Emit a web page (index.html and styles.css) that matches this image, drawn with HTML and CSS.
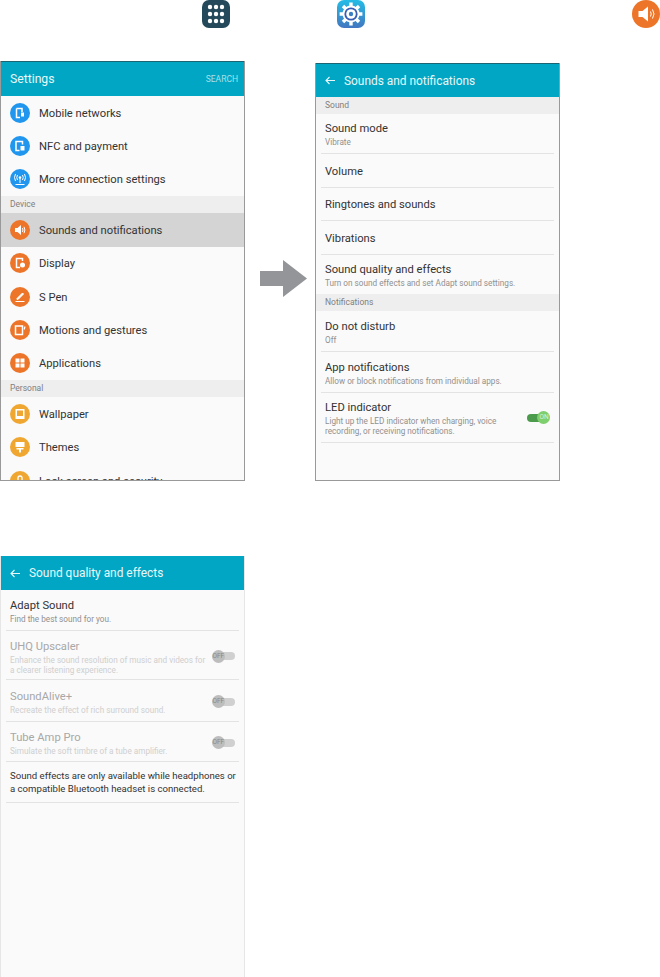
FILE: index.html
```html
<!DOCTYPE html>
<html lang="en">
<head>
  <meta charset="UTF-8" />
  <meta name="viewport" content="width=device-width, initial-scale=1.0" />
  <title>Sound quality and effects</title>
  <link rel="stylesheet" href="styles.css">
</head>
<body>

<div class="step-icons">
  <svg class="step-icon" viewBox="0 0 28 28">
    <rect width="28" height="28" rx="7" fill="#23495a"/>
    <g fill="#fff">
      <circle cx="8" cy="7" r="2.2"/><circle cx="14" cy="7" r="2.2"/><circle cx="20" cy="7" r="2.2"/>
      <circle cx="8" cy="14" r="2.2"/><circle cx="14" cy="14" r="2.2"/><circle cx="20" cy="14" r="2.2"/>
      <circle cx="8" cy="21" r="2.2"/><circle cx="14" cy="21" r="2.2"/><circle cx="20" cy="21" r="2.2"/>
    </g>
  </svg>
  <svg class="step-icon gear" viewBox="0 0 28 28">
    <defs>
      <linearGradient id="gear-bg" x1="0" y1="0" x2="0" y2="1">
        <stop offset="0" stop-color="#25bce6"/>
        <stop offset="1" stop-color="#4277c0"/>
      </linearGradient>
    </defs>
    <rect width="28" height="28" rx="7" fill="url(#gear-bg)"/>
    <circle cx="14" cy="14" r="8.5" fill="#fff"/>
    <g stroke="#fff" stroke-width="3.4">
      <path d="M14 2.6v22.8M2.6 14h22.8M6 6l16 16M22 6L6 22"/>
    </g>
    <circle cx="14" cy="14" r="6.6" fill="#3a5db4"/>
    <circle cx="14" cy="14" r="4.8" fill="#fff"/>
    <circle cx="14" cy="14" r="2.2" fill="#3a7fc4"/>
  </svg>
  <svg class="step-icon speaker" viewBox="0 0 28 28">
    <circle cx="14" cy="14" r="14" fill="#ec7529"/>
    <path d="M6.500 11h4l5.500-4.500v15L10.500 17h-4z" fill="#fff"/>
    <path d="M18.500 11.500q1.500 2.500 0 5M20.500 9.500q3 4.500 0 9" fill="none" stroke="#fff" stroke-width="1"/>
  </svg>
</div>

<div class="panels">
  <div class="panel settings">
    <div class="app-bar">
      <span class="app-title">Settings</span>
      <span class="app-action">SEARCH</span>
    </div>
    <div class="menu-row">
      <svg class="menu-icon" viewBox="0 0 20 20"><circle cx="10" cy="10" r="10" fill="#2196ee"/><path d="M6.500 5.500h5.500v3.500M6.500 5.500v9h3.500" fill="none" stroke="#fff" stroke-width="1.500"/><path d="M11 9.500h3v4h-3z" fill="#fff"/></svg>
      <span>Mobile networks</span>
    </div>
    <div class="menu-row">
      <svg class="menu-icon" viewBox="0 0 20 20"><circle cx="10" cy="10" r="10" fill="#2196ee"/><path d="M12.500 8.500V5.500h-6.500v9h3.500" fill="none" stroke="#fff" stroke-width="1.500"/><path d="M10.500 10h4v4.500h-4z" fill="#fff"/></svg>
      <span>NFC and payment</span>
    </div>
    <div class="menu-row">
      <svg class="menu-icon" viewBox="0 0 20 20"><circle cx="10" cy="10" r="10" fill="#2196ee"/><circle cx="10" cy="8.500" r="1.300" fill="#fff"/><path d="M10 9v5M7.500 6q-1.500 2.500 0 5M12.500 6q1.500 2.500 0 5M5.500 5q-2 3.500 0 7M14.500 5q2 3.500 0 7M5.500 15.500h9" fill="none" stroke="#fff" stroke-width="1"/></svg>
      <span>More connection settings</span>
    </div>
    <div class="section-label">Device</div>
    <div class="menu-row selected">
      <svg class="menu-icon" viewBox="0 0 20 20"><circle cx="10" cy="10" r="10" fill="#ec7529"/><path d="M5 8h2.500l3.500-3v10l-3.500-3H5z" fill="#fff"/><path d="M12.500 8q1 2 0 4M14 6.800q1.800 3.200 0 6.400" fill="none" stroke="#fff" stroke-width="1"/></svg>
      <span>Sounds and notifications</span>
    </div>
    <div class="menu-row">
      <svg class="menu-icon" viewBox="0 0 20 20"><circle cx="10" cy="10" r="10" fill="#ec7529"/><path d="M12.500 8V5.500h-6v9h3.500" fill="none" stroke="#fff" stroke-width="1.500"/><circle cx="12.500" cy="12" r="2.500" fill="#fff"/></svg>
      <span>Display</span>
    </div>
    <div class="menu-row">
      <svg class="menu-icon" viewBox="0 0 20 20"><circle cx="10" cy="10" r="10" fill="#ec7529"/><path d="M7 11.500l5.500-5.500 1 1-5.500 5.500H7zM5.500 14.500h9" fill="#fff" stroke="#fff" stroke-width="1"/></svg>
      <span>S Pen</span>
    </div>
    <div class="menu-row">
      <svg class="menu-icon" viewBox="0 0 20 20"><circle cx="10" cy="10" r="10" fill="#ec7529"/><path d="M5.500 6h7v8.500h-7z" fill="none" stroke="#fff" stroke-width="1.500"/><path d="M15 6.500l-.8 3" stroke="#fff" stroke-width="1.200"/></svg>
      <span>Motions and gestures</span>
    </div>
    <div class="menu-row">
      <svg class="menu-icon" viewBox="0 0 20 20"><circle cx="10" cy="10" r="10" fill="#ec7529"/><path d="M5.500 5.500h4v4h-4zM10.500 5.500h4v4h-4zM5.500 10.500h4v4h-4zM10.500 10.500h4v4h-4z" fill="#fff"/></svg>
      <span>Applications</span>
    </div>
    <div class="section-label">Personal</div>
    <div class="menu-row">
      <svg class="menu-icon" viewBox="0 0 20 20"><circle cx="10" cy="10" r="10" fill="#f0a732"/><path d="M5.500 5h9v10h-9z" fill="#fff"/><path d="M7 6.500h6v5.500H7z" fill="#f0a732"/></svg>
      <span>Wallpaper</span>
    </div>
    <div class="menu-row">
      <svg class="menu-icon" viewBox="0 0 20 20"><circle cx="10" cy="10" r="10" fill="#f0a732"/><path d="M5.500 5h9v5h-9zM6.500 11h7v1.500h-2.500v3h-2v-3H6.500z" fill="#fff"/></svg>
      <span>Themes</span>
    </div>
    <div class="menu-row">
      <svg class="menu-icon" viewBox="0 0 20 20"><circle cx="10" cy="10" r="10" fill="#f0a732"/><path d="M6.500 9h7v6h-7z" fill="#fff"/><path d="M8 9V7a2 2 0 0 1 4 0v2" fill="none" stroke="#fff" stroke-width="1.300"/></svg>
      <span>Lock screen and security</span>
    </div>
  </div>

  <svg class="arrow" viewBox="0 0 47 37"><path d="M0 11h23V0l24 18.500L23 37V26H0z" fill="#939598"/></svg>

  <div class="panel sounds">
    <div class="app-bar short">
      <svg class="back" viewBox="0 0 10 9"><path d="M10 4.500H1M4.500 1L1 4.500 4.500 8" fill="none" stroke="#e8f7fa" stroke-width="1.100"/></svg>
      <span class="app-title sub">Sounds and notifications</span>
    </div>
    <div class="section-label">Sound</div>
    <div class="item h40"><div class="item-title">Sound mode</div><div class="item-sub">Vibrate</div></div>
    <div class="item h34"><div class="item-title">Volume</div></div>
    <div class="item h33"><div class="item-title">Ringtones and sounds</div></div>
    <div class="item h34"><div class="item-title">Vibrations</div></div>
    <div class="item h39 plain"><div class="item-title">Sound quality and effects</div><div class="item-sub">Turn on sound effects and set Adapt sound settings.</div></div>
    <div class="section-label">Notifications</div>
    <div class="item h41"><div class="item-title">Do not disturb</div><div class="item-sub">Off</div></div>
    <div class="item h41"><div class="item-title">App notifications</div><div class="item-sub">Allow or block notifications from individual apps.</div></div>
    <div class="item h50 with-toggle">
      <div>
        <div class="item-title">LED indicator</div>
        <div class="item-sub">Light up the LED indicator when charging, voice<br>recording, or receiving notifications.</div>
      </div>
      <span class="toggle on">ON</span>
    </div>
  </div>
</div>

<div class="panel effects">
  <div class="app-bar short">
    <svg class="back" viewBox="0 0 10 9"><path d="M10 4.500H1M4.500 1L1 4.500 4.500 8" fill="none" stroke="#e8f7fa" stroke-width="1.100"/></svg>
    <span class="app-title sub">Sound quality and effects</span>
  </div>
  <div class="item h41"><div class="item-title">Adapt Sound</div><div class="item-sub">Find the best sound for you.</div></div>
  <div class="item h49 with-toggle disabled">
    <div>
      <div class="item-title">UHQ Upscaler</div>
      <div class="item-sub">Enhance the sound resolution of music and videos for<br>a clearer listening experience.</div>
    </div>
    <span class="toggle">OFF</span>
  </div>
  <div class="item h42 with-toggle disabled">
    <div>
      <div class="item-title">SoundAlive+</div>
      <div class="item-sub">Recreate the effect of rich surround sound.</div>
    </div>
    <span class="toggle">OFF</span>
  </div>
  <div class="item h40 with-toggle disabled">
    <div>
      <div class="item-title">Tube Amp Pro</div>
      <div class="item-sub">Simulate the soft timbre of a tube amplifier.</div>
    </div>
    <span class="toggle">OFF</span>
  </div>
  <div class="item h41 note">Sound effects are only available while headphones or<br>a compatible Bluetooth headset is connected.</div>
</div>

</body>
</html>
```

FILE: styles.css
```css
:root {
  --bar-color: #00a6c3;
  --panel-bg: #fafafa;
  --section-bg: #eeeeee;
  --line-color: #e3e3e3;
  --text-color: #333;
  --sub-color: #909090;
}
body {
  font-family: Roboto, "Liberation Sans", sans-serif;
  background: #fff;
  color: var(--text-color);
  margin: 0;
  width: 660px;
  height: 977px;
  overflow: hidden;
}
.step-icons {
  display: flex;
  height: 28px;
  padding-left: 202px;
}
.step-icon {
  width: 28px;
  height: 28px;
  display: block;
}
.step-icon.gear {
  margin-left: 107px;
}
.step-icon.speaker {
  margin-left: auto;
}
.panels {
  display: flex;
  align-items: flex-end;
  margin-top: 33px;
}
.panel {
  box-sizing: border-box;
  width: 245px;
  background: var(--panel-bg);
  border: 1px solid #999;
  border-top: 0;
  overflow: hidden;
}
.settings {
  height: 420px;
}
.sounds {
  height: 418px;
  margin-left: 8px;
}
.effects {
  height: 421px;
  margin-top: 75px;
  border-color: #e6e6e6;
  border-bottom: 0;
}
.arrow {
  width: 47px;
  height: 37px;
  flex: none;
  margin-left: 15px;
  align-self: center;
  margin-top: 14px;
}
.app-bar {
  box-sizing: border-box;
  display: flex;
  align-items: center;
  justify-content: space-between;
  height: 35px;
  padding: 0 6px 0 9px;
  background: var(--bar-color);
  border-top: 1px solid #1d6473;
}
.app-bar.short {
  justify-content: flex-start;
  height: 34px;
}
.effects .app-bar.short {
  border-top: 0;
}
.app-title {
  font-size: 12.200px;
  color: #e8f7fa;
}
.app-title.sub {
  font-size: 11.900px;
  margin-left: 9px;
}
.app-action {
  font-size: 8.500px;
  color: #a9e0ea;
}
.back {
  width: 10px;
  height: 9px;
  flex: none;
}
.section-label {
  height: 17px;
  line-height: 17px;
  padding-left: 9px;
  font-size: 8.500px;
  color: #808080;
  background: var(--section-bg);
}
.menu-row {
  display: flex;
  align-items: center;
  height: 33.400px;
  padding-left: 9px;
  font-size: 11.200px;
}
.menu-row span {
  padding-top: 1px;
}
.menu-row.selected {
  background: #d4d4d4;
}
.menu-icon {
  width: 20px;
  height: 20px;
  flex: none;
  margin-right: 9px;
}
.item {
  box-sizing: border-box;
  display: flex;
  flex-direction: column;
  justify-content: center;
  margin: 0 5px;
  padding: 0 4px;
  border-bottom: 1px solid var(--line-color);
}
.item.plain {
  border-bottom: 0;
}
.h33 { height: 33px; }
.h34 { height: 34px; }
.h39 { height: 39px; }
.h40 { height: 40px; }
.h41 { height: 41px; }
.h42 { height: 42px; }
.h49 { height: 49px; }
.h50 { height: 50px; }
.item-title {
  font-size: 11.200px;
  line-height: 14px;
  padding-top: 2px;
}
.item-sub {
  font-size: 8.200px;
  line-height: 10px;
  margin-top: 1px;
  color: var(--sub-color);
}
.item.with-toggle {
  flex-direction: row;
  align-items: center;
  justify-content: space-between;
}
.item.disabled {
  padding-top: 2px;
}
.item.disabled .item-title {
  color: #a8a8a8;
}
.item.disabled .item-sub {
  color: #cfcfcf;
}
.item.note {
  font-size: 9.600px;
  line-height: 13.500px;
  white-space: nowrap;
}
.toggle {
  position: relative;
  z-index: 0;
  flex: none;
  width: 23px;
  height: 13px;
  font-size: 6.500px;
  line-height: 13px;
  text-indent: 0.500px;
  color: #888;
}
.toggle::before {
  content: "";
  position: absolute;
  z-index: -1;
  top: 2.500px;
  left: 4px;
  right: 0;
  height: 8px;
  border-radius: 4px;
  background: #d0d0d0;
}
.toggle::after {
  content: "";
  position: absolute;
  z-index: -1;
  top: 0;
  left: 0;
  width: 13px;
  height: 13px;
  border-radius: 50%;
  background: #bdbdbd;
}
.toggle.on {
  color: #d8f2d8;
  text-indent: 12.500px;
}
.toggle.on::before {
  left: 0;
  right: 4px;
  background: #4c9a4c;
}
.toggle.on::after {
  left: 10px;
  background: #7fcf6f;
}
```
